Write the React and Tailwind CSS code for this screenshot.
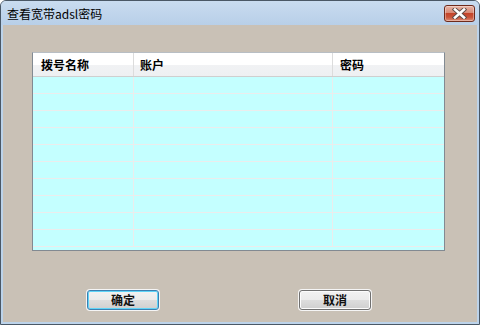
import React from 'react'

const font = { fontFamily: '"Noto Sans CJK SC", "Liberation Sans", sans-serif' }

const rows = Array.from({ length: 10 })

const CloseButton = () => (
  <div className="mt-[4px] mr-[4px] w-[31px] h-[17px] rounded-[3px] border border-[#6e2a1c] bg-[linear-gradient(to_bottom,#e7b4a6_0%,#d88a76_45%,#c4442a_50%,#c9543a_75%,#dc8e78_100%)] flex items-center justify-center shadow-[inset_0_0_0_1px_rgba(255,255,255,0.35)]">
    <svg width="15" height="11" viewBox="0 0 15 11">
      <path d="M3 1.5 L12 9.5 M12 1.5 L3 9.5" stroke="#5a4a46" strokeWidth="4.4" strokeLinecap="square" />
      <path d="M3 1.5 L12 9.5 M12 1.5 L3 9.5" stroke="#ffffff" strokeWidth="2.6" strokeLinecap="square" />
    </svg>
  </div>
)

const Button = ({ label, focused }) => (
  <div className="p-px bg-[#f5f5f5] rounded-[4px]">
    <div
      className={
        focused
          ? 'w-[72px] h-[20px] rounded-[3px] border border-[#3c7fb1] shadow-[inset_0_0_0_1px_#5fd4f8] bg-[linear-gradient(to_bottom,#f2f2f2_0%,#ebebeb_50%,#dddddd_51%,#cfcfcf_100%)] flex items-center justify-center text-[12px] font-semibold text-[#111]'
          : 'w-[72px] h-[20px] rounded-[3px] border border-[#707070] shadow-[inset_0_0_0_1px_#fcfcfc] bg-[linear-gradient(to_bottom,#f2f2f2_0%,#ebebeb_50%,#dddddd_51%,#cfcfcf_100%)] flex items-center justify-center text-[12px] font-semibold text-[#111]'
      }
    >
      {label}
    </div>
  </div>
)

export default function App() {
  return (
    <div className="w-[480px] h-[325px] bg-white" style={font}>
      <div className="w-[480px] h-[325px] flex flex-col rounded-t-[6px] border border-[#4a5866] bg-[#bcd3ea] overflow-hidden">
        {/* Title bar */}
        <div className="h-[24px] flex items-start justify-between bg-[linear-gradient(to_bottom,#c9dcf0,#b8cfe8)]">
          <div className="pl-[6px] pt-[5px] text-[12px] leading-[16px] text-black">查看宽带adsl密码</div>
          <CloseButton />
        </div>

        {/* Client area */}
        <div className="flex-1 mx-[2px] mb-[2px] bg-[#c9c1b6] flex flex-col">
          {/* List */}
          <div className="ml-[29px] mt-[27px] w-[413px] h-[199px] border border-[#828a92] border-t-[#b8bec4] bg-[#c4ffff] flex flex-col overflow-hidden">
            <div className="h-[24px] shrink-0 flex border-b border-[#cfcfcf] bg-[linear-gradient(to_bottom,#ffffff_0%,#ffffff_50%,#f1f2f4_51%,#eef0f2_100%)] text-[12px] font-semibold text-black">
              <div className="w-[101px] pl-[8px] flex items-center border-r border-[#dcdcdc]">拨号名称</div>
              <div className="w-[199px] pl-[6px] flex items-center border-r border-[#dcdcdc]">账户</div>
              <div className="flex-1 pl-[7px] flex items-center">密码</div>
            </div>
            {rows.map((_, i) => (
              <div key={i} className="h-[17px] shrink-0 flex border-b border-[#ececec]">
                <div className="w-[101px] border-r border-[#ececec]" />
                <div className="w-[199px] border-r border-[#ececec]" />
                <div className="flex-1" />
              </div>
            ))}
          </div>

          {/* Buttons */}
          <div className="flex mt-[38px] ml-[83px] gap-[138px]">
            <Button label="确定" focused />
            <Button label="取消" />
          </div>
        </div>
      </div>
    </div>
  )
}
